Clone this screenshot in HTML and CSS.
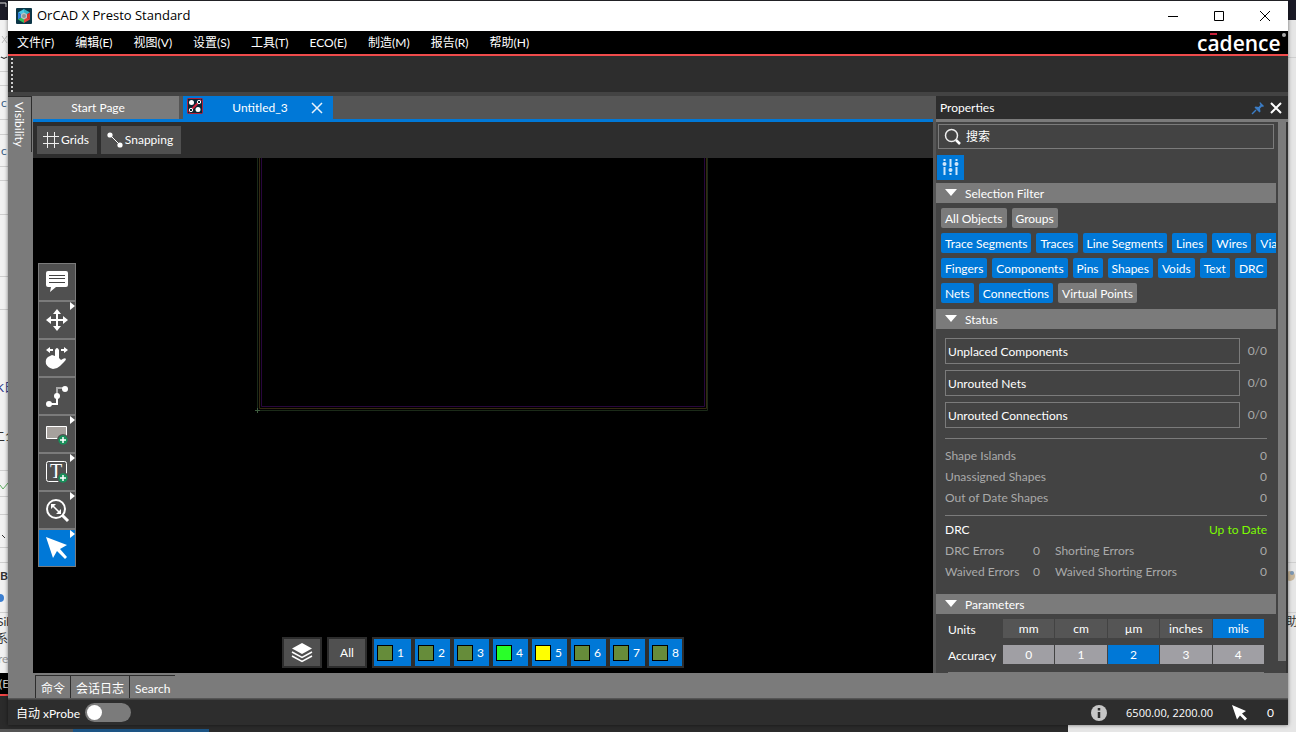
FILE: index.html
```html
<!DOCTYPE html>
<html lang="zh-CN">

<head>
    <meta charset="utf-8">
    <meta name="viewport" content="width=device-width">
    <title>OrCAD X Presto Standard</title>
    <link rel="stylesheet" href="styles.css">
</head>

<body>
    <div class="desktop">

        <!-- windows that stick out behind the main one -->
        <div class="behind-top"></div>
        <svg class="behind-left" width="8" height="732">
            <rect width="8" height="732" fill="#f2f2f2"/>
            <rect width="8" height="20" fill="#1b1b27"/>
            <path d="M0 3h6v4" stroke="#ddd" fill="none"/>
            <path d="M0 57.500h8M0 71.500h8M0 85.500h8M0 119.500h8M0 134.500h8M0 166.500h8M0 180.500h8M0 214.500h8M0 276.500h8M0 309.500h8M0 470.500h8M0 496.500h8M0 514.500h8M0 547.500h8M0 562.500h8M0 612.500h8" stroke="#cfcfcf"/>
            <path d="M2 36l5 7M7 36l-5 7" stroke="#bbb" fill="none"/>
            <path d="M1 57q3 3 6 0" stroke="#222" fill="none"/>
            <path d="M0 485l3 4 5-6" stroke="#5fae62" fill="none"/>
            <path d="M2 535l3 3" stroke="#333"/>
            <circle cx="0" cy="598" r="4" fill="#3c7fd0"/>
            <text x="1" y="107" fill="#3b5f85">c</text>
            <text x="1" y="155" fill="#3b5f85">c</text>
            <text x="-4" y="392" fill="#2c3a8c">K日</text>
            <text x="-7" y="441" fill="#333">二1</text>
            <text x="0" y="580" fill="#333" font-weight="bold">B</text>
            <text x="-3" y="626" fill="#333">Sil</text>
            <text x="-4" y="643" fill="#333">系</text>
            <text x="-2" y="663" fill="#999">re</text>
            <rect y="673" width="8" height="21" fill="#000"/>
            <text x="-1" y="688" fill="#ccc">(E</text>
            <rect y="694" width="8" height="2" fill="#ef4444"/>
            <rect y="696" width="8" height="40" fill="#2b2b2b"/>
        </svg>
        <svg class="behind-right" width="8" height="732">
            <rect width="8" height="732" fill="#e6e6e6"/>
            <rect width="8" height="20" fill="#1b1b27"/>
            <path d="M0 57.500h8M0 562.500h8M0 612.500h8" stroke="#cfcfcf"/>
            <circle cx="2" cy="576" r="5" fill="#c9b79b"/>
            <circle cx="4" cy="573" r="2" fill="#7d98b4"/>
            <text x="-2" y="626" fill="#333">助</text>
        </svg>
        <div class="behind-bottom"><i></i><b></b><span></span></div>

        <div class="window">

            <header class="titlebar">
                <svg width="16" height="16" viewBox="0 0 16 16">
                    <rect width="16" height="16" rx="1" fill="#0b3546"/>
                    <path d="M8 1l6 3.500L8 8z" fill="#2fb5c8"/>
                    <path d="M8 1L2 4.500 8 8z" fill="#4bc6e6"/>
                    <path d="M2 4.500v7L8 8z" fill="#2f7fe0"/>
                    <path d="M2 11.500L8 15V8z" fill="#35c05a"/>
                    <path d="M14 4.500v7L8 8z" fill="#d9302c"/>
                    <path d="M14 11.500L8 15V8z" fill="#e2453a"/>
                    <path d="M8 4.500l3 1.700v3.600l-3 1.700-3-1.700V6.200z" fill="#b9c4c6"/>
                    <circle cx="8" cy="8" r="2" fill="#8d9495"/>
                </svg>
                <h1>OrCAD X Presto Standard</h1>
                <div class="win-buttons">
                    <button aria-label="Minimize"><svg width="12" height="12"><path d="M1 6.500h10" stroke="#000"/></svg></button>
                    <button aria-label="Maximize"><svg width="12" height="12"><path d="M1.500 1.500h9v9h-9z" stroke="#000" fill="none"/></svg></button>
                    <button aria-label="Close"><svg width="12" height="12"><path d="M1 1l10 10M11 1L1 11" stroke="#000" fill="none"/></svg></button>
                </div>
            </header>

            <nav class="menubar">
                <button>文件(F)</button>
                <button>编辑(E)</button>
                <button>视图(V)</button>
                <button>设置(S)</button>
                <button>工具(T)</button>
                <button>ECO(E)</button>
                <button>制造(M)</button>
                <button>报告(R)</button>
                <button>帮助(H)</button>
                <svg class="brand" width="91" height="23" viewBox="0 0 91 23">
                    <text x="0" y="20">cadence</text>
                    <rect x="13" y="2" width="7" height="2" fill="#c8203a"/>
                    <circle cx="87" cy="4" r="2" fill="#aaa"/>
                </svg>
            </nav>

            <div class="toolbar"></div>

            <div class="main">

                <aside class="left-dock">
                    <button class="dock-tab">Visibility</button>
                </aside>

                <section class="document">
                    <div class="doc-tabs">
                        <button class="doc-tab">Start Page</button>
                        <div class="doc-tab active">
                            <svg class="board-icon" width="16" height="16" viewBox="0 0 16 16">
                                <rect x=".5" y=".5" width="15" height="15" rx="1" fill="#0c2733" stroke="#b3203a"/>
                                <path d="M2 14L14 2" stroke="#d3203a" stroke-width="2"/>
                                <circle cx="4.500" cy="4.500" r="2.500" fill="#fff"/>
                                <circle cx="11" cy="11.500" r="2.500" fill="#fff"/>
                                <circle cx="12" cy="4" r="1.700" fill="#0c2733" stroke="#fff"/>
                                <circle cx="4" cy="12" r="1.700" fill="#0c2733" stroke="#fff"/>
                            </svg>
                            <span>Untitled_3</span>
                            <button aria-label="Close tab"><svg width="12" height="12"><path d="M1 1l10 10M11 1L1 11" stroke="#e8f2fb" stroke-width="1.500"/></svg></button>
                        </div>
                    </div>

                    <div class="doc-tools">
                        <button>
                            <svg width="16" height="16"><path d="M4.500 0v16M11.500 0v16M0 4.500h16M0 11.500h16" stroke="#eee"/></svg>
                            <span>Grids</span>
                        </button>
                        <button>
                            <svg width="16" height="16"><path d="M3 3l11 11" stroke="#fff"/><circle cx="3" cy="3" r="2.600" fill="#fff"/><circle cx="13" cy="13" r="2.600" fill="#fff"/></svg>
                            <span>Snapping</span>
                        </button>
                    </div>

                    <div class="canvas">
                        <svg class="board" width="900" height="515">
                            <path d="M224.500 0v252.500H674.500V0" stroke="#1b2a18"/>
                            <path d="M226.500 0v250.500H673.500V0" stroke="#352a12"/>
                            <path d="M228.500 0v248.500H671.500V0" stroke="#28063c"/>
                            <path d="M222 252.500h5M224.500 250v5" stroke="#3e5c3e"/>
                        </svg>

                        <div class="palette">
                            <button aria-label="Comment">
                                <svg viewBox="0 0 36 36">
                                    <path d="M9 7h18a2 2 0 0 1 2 2v12a2 2 0 0 1-2 2H17l-6 5 1-5H9a2 2 0 0 1-2-2V9a2 2 0 0 1 2-2z" fill="#fff"/>
                                    <path d="M10 11.500h16M10 14.500h16M10 18.500h16" stroke="#444"/>
                                </svg>
                            </button>
                            <button class="more" aria-label="Move">
                                <svg viewBox="0 0 36 36">
                                    <path d="M18 9v18M9 18h18" stroke="#fff" stroke-width="2"/>
                                    <path d="M18 7l4 5h-8zM18 29l4-5h-8zM7 18l5-4v8zM29 18l-5-4v8z" fill="#fff"/>
                                </svg>
                            </button>
                            <button aria-label="Slide">
                                <svg viewBox="0 0 36 36">
                                    <path d="M7 10l4-3v2h3v2h-3v2zM29 10l-4-3v2h-3v2h3v2z" fill="#fff"/>
                                    <path d="M16 10q2-4 4 0v8l2 2q4-3 5-1 0 1-2 3l-4 4q-3 3-7 3-5-1-7-5-1-5 2-7l4-2 3 1z" fill="#fff"/>
                                </svg>
                            </button>
                            <button aria-label="Route">
                                <svg viewBox="0 0 36 36">
                                    <path d="M10 26h8v-8" stroke="#fff" stroke-width="2" fill="none"/>
                                    <path d="M18 18v-8h8" stroke="#aaa" stroke-width="2" fill="none"/>
                                    <circle cx="10" cy="26" r="3" fill="#fff"/><circle cx="18" cy="18" r="3" fill="#fff"/><circle cx="26" cy="11" r="3" fill="#fff"/>
                                </svg>
                            </button>
                            <button class="more" aria-label="Add shape">
                                <svg viewBox="0 0 36 36">
                                    <path d="M7.500 10.500h20v12h-20z" fill="#a6a19d" stroke="#fff"/>
                                    <circle cx="24" cy="24" r="6" fill="#505050"/>
                                    <circle cx="24" cy="24" r="4.700" fill="#188f5a"/><path d="M24 21v6M21 24h6" stroke="#fff" stroke-width="1.500"/>
                                </svg>
                            </button>
                            <button class="more" aria-label="Add text">
                                <svg viewBox="0 0 36 36">
                                    <rect x="7.500" y="7.500" width="20" height="20" rx="2" fill="none" stroke="#fff"/>
                                    <text x="17" y="24" text-anchor="middle" class="serif-t">T</text>
                                    <circle cx="24" cy="24" r="6" fill="#505050"/>
                                    <circle cx="24" cy="24" r="4.700" fill="#188f5a"/><path d="M24 21v6M21 24h6" stroke="#fff" stroke-width="1.500"/>
                                </svg>
                            </button>
                            <button class="more" aria-label="Zoom">
                                <svg viewBox="0 0 36 36">
                                    <circle cx="17" cy="17" r="9" fill="none" stroke="#fff" stroke-width="2"/>
                                    <path d="M23 23l6 6" stroke="#fff" stroke-width="3"/>
                                    <path d="M14 14l6 6" stroke="#fff" stroke-width="1.500"/>
                                    <path d="M12 12h5l-5 5zM22 22h-5l5-5z" fill="#fff"/>
                                </svg>
                            </button>
                            <button class="more active" aria-label="Select">
                                <svg viewBox="0 0 36 36">
                                    <path d="M7 7l21 8-7 4 7 8-2 2-8-8-4 7z" fill="#fff"/>
                                </svg>
                            </button>
                        </div>

                        <div class="layerbar">
                            <button class="layer-btn" aria-label="Layers">
                                <svg width="22" height="20" viewBox="0 0 22 20">
                                    <path d="M11 0l10 5.500L11 11 1 5.500z" fill="#fff"/>
                                    <path d="M1 9l10 5.500L21 9M1 13l10 5.500L21 13" stroke="#fff" stroke-width="1.500" fill="none"/>
                                </svg>
                            </button>
                            <button class="layer-btn">All</button>
                            <div class="layers">
                                <button><i></i>1</button>
                                <button><i></i>2</button>
                                <button><i></i>3</button>
                                <button><i class="lime"></i>4</button>
                                <button><i class="yellow"></i>5</button>
                                <button><i></i>6</button>
                                <button><i></i>7</button>
                                <button><i></i>8</button>
                            </div>
                        </div>
                    </div>
                </section>

                <aside class="properties">
                    <div class="panel-head">
                        <h2>Properties</h2>
                        <button aria-label="Pin">
                            <svg width="14" height="14" viewBox="0 0 14 14"><path d="M1 13l4-4" stroke="#3b7cc4" stroke-width="1.500"/><path d="M9 1l4 4-1 1-1-.5-2 2 .5 3-1 1-5-5 1-1 3 .5 2-2L8.500 2z" fill="#3b7cc4"/></svg>
                        </button>
                        <button aria-label="Close panel">
                            <svg width="12" height="12"><path d="M1 1l10 10M11 1L1 11" stroke="#fff" stroke-width="2"/></svg>
                        </button>
                    </div>

                    <div class="panel-body">
                        <div class="panel-content">
                            <label class="search">
                                <svg width="18" height="18" viewBox="0 0 18 18"><circle cx="7.500" cy="7.500" r="6" fill="none" stroke="#eee" stroke-width="1.500"/><path d="M12 12l4 4" stroke="#fff" stroke-width="2.500"/></svg>
                                <input type="text" placeholder="搜索" aria-label="搜索">
                            </label>
                            <button class="filter-btn" aria-label="Filters">
                                <svg width="17" height="17" viewBox="0 0 17 17">
                                    <path d="M2.500 0v2M2.500 8v8M8.500 0v8M8.500 14v2M14.500 0v2M14.500 8v8" stroke="#cfe6fb" stroke-width="2"/>
                                    <circle cx="2.500" cy="5" r="2" fill="#cfe6fb"/><circle cx="8.500" cy="11" r="2" fill="#cfe6fb"/><circle cx="14.500" cy="5" r="2" fill="#cfe6fb"/>
                                </svg>
                            </button>

                            <h3 class="section-head">Selection Filter</h3>
                            <div class="chips">
                                <div class="chip-row">
                                    <button class="off">All Objects</button><button class="off">Groups</button>
                                </div>
                                <div class="chip-row">
                                    <button>Trace Segments</button><button>Traces</button><button>Line Segments</button><button>Lines</button><button>Wires</button><button>Vias</button>
                                </div>
                                <div class="chip-row">
                                    <button>Fingers</button><button>Components</button><button>Pins</button><button>Shapes</button><button>Voids</button><button>Text</button><button>DRC</button>
                                </div>
                                <div class="chip-row">
                                    <button>Nets</button><button>Connections</button><button class="off">Virtual Points</button>
                                </div>
                            </div>

                            <h3 class="section-head">Status</h3>
                            <div class="status">
                                <div class="unrouted"><button>Unplaced Components</button><span>0/0</span></div>
                                <div class="unrouted"><button>Unrouted Nets</button><span>0/0</span></div>
                                <div class="unrouted"><button>Unrouted Connections</button><span>0/0</span></div>
                                <hr>
                                <div class="row"><span>Shape Islands</span><span>0</span></div>
                                <div class="row"><span>Unassigned Shapes</span><span>0</span></div>
                                <div class="row"><span>Out of Date Shapes</span><span>0</span></div>
                                <hr>
                                <div class="row"><strong>DRC</strong><em>Up to Date</em></div>
                                <div class="row errors"><span>DRC Errors</span><span>0</span><span>Shorting Errors</span><span>0</span></div>
                                <div class="row errors"><span>Waived Errors</span><span>0</span><span>Waived Shorting Errors</span><span>0</span></div>
                            </div>

                            <h3 class="section-head">Parameters</h3>
                            <div class="params">
                                <div class="param">
                                    <span>Units</span>
                                    <div class="choices">
                                        <button>mm</button><button>cm</button><button>µm</button><button>inches</button><button class="active">mils</button>
                                    </div>
                                </div>
                                <div class="param accuracy">
                                    <span>Accuracy</span>
                                    <div class="choices">
                                        <button>0</button><button>1</button><button class="active">2</button><button>3</button><button>4</button>
                                    </div>
                                </div>
                                <hr>
                            </div>
                        </div>
                        <div class="scrollbar"><div class="thumb"></div></div>
                    </div>
                </aside>
            </div>

            <nav class="bottom-tabs">
                <button>命令</button>
                <button>会话日志</button>
                <button>Search</button>
            </nav>

            <footer class="statusbar">
                <label for="xprobe">自动 xProbe</label>
                <input type="checkbox" id="xprobe" class="toggle">
                <svg class="info" width="16" height="16"><circle cx="8" cy="8" r="8" fill="#c6c6c6"/><path d="M8 3v2.500M8 7v6" stroke="#2d2d2d" stroke-width="2.500"/></svg>
                <span class="coords">6500.00, 2200.00</span>
                <svg class="pointer" width="16" height="16"><path d="M0 0l14 6-4 2.500 5 5-2 2-5-5-3 4z" fill="#fff"/></svg>
                <span class="count">0</span>
            </footer>
        </div>
    </div>
</body>

</html>
```
FILE: styles.css
```css
* {
    box-sizing: border-box;
}

body {
    margin: 0;
    font-family: Lato, "Noto Sans CJK SC", sans-serif;
    font-size: 12px;
    line-height: 16px;
    color: #fff;
}

button, input {
    font: inherit;
    color: inherit;
    border: 0;
    padding: 0;
    margin: 0;
    background: none;
}

h1, h2, h3 {
    margin: 0;
    font-size: 12px;
    font-weight: normal;
}

svg {
    display: block;
    flex: none;
}

hr {
    width: 100%;
    height: 1px;
    border: 0;
    background: #7b7b7b;
}

/* desktop */
.desktop {
    display: grid;
    grid-template-columns: 8px minmax(0, 1fr) 8px;
    grid-template-rows: 1px minmax(0, 1fr) 7px;
    height: 100vh;
    overflow: hidden;
    background: #2b2b2b;
}

.behind-top {
    grid-area: 1 / 1 / 2 / 4;
    background: #2b2b30;
}

.behind-left {
    grid-area: 1 / 1 / 4 / 2;
}

.behind-right {
    grid-area: 1 / 3 / 4 / 4;
}

.behind-bottom {
    grid-area: 3 / 1 / 4 / 4;
    display: grid;
    grid-template-columns: 73px 136px 1fr 228px;
    align-items: end;
    background: #2b2b2b;
}

.behind-bottom i {
    height: 3px;
    background: #555;
}

.behind-bottom b {
    height: 3px;
    background: #1d5585;
}

.behind-bottom span {
    grid-column: 4;
    height: 7px;
    background: #e6e6e6;
}

.window {
    grid-area: 2 / 2 / 3 / 3;
    display: flex;
    flex-direction: column;
    min-height: 0;
    background: #434343;
    box-shadow: 0 0 4px #00000088;
}

/* title and menu */
.titlebar {
    display: flex;
    align-items: center;
    height: 30px;
    padding-left: 8px;
    gap: 5px;
    background: #fff;
    color: #000;
}

.titlebar h1 {
    font-family: "Open Sans", sans-serif;
    font-size: 13px;
    line-height: 14px;
    padding-bottom: 2px;
}

.win-buttons {
    display: flex;
    margin-left: auto;
}

.win-buttons button {
    display: flex;
    align-items: center;
    justify-content: center;
    width: 46px;
    height: 30px;
}

.menubar {
    display: flex;
    align-items: center;
    height: 25px;
    padding-left: 9px;
    gap: 21px;
    background: #000;
    border-bottom: 2px solid #ef4b4b;
}

.brand {
    margin-left: auto;
}

.brand text {
    font-family: "Open Sans", sans-serif;
    font-size: 21px;
    font-weight: 600;
    fill: #fff;
}

.toolbar {
    height: 40px;
    padding-left: 3px;
    background: #2d2d2d;
    border-bottom: 4px solid #434343;
}

.toolbar::before {
    content: "";
    display: block;
    width: 2px;
    height: 34px;
    margin-top: 2px;
    background: repeating-linear-gradient(#ccc 0 2px, transparent 2px 4px);
}

/* main area */
.main {
    display: grid;
    grid-template-columns: 25px minmax(0, 1fr) 352px;
    flex: 1;
    min-height: 0;
}

.left-dock {
    background: #7b7b7b;
}

.dock-tab {
    writing-mode: vertical-rl;
    width: 24px;
    height: 56px;
    padding-right: 2px;
    border-top: 1px solid #2d2d2d;
    border-right: 1px solid #2d2d2d;
}

.document {
    display: flex;
    flex-direction: column;
    min-width: 0;
    background: #2d2d2d;
    border-right: 3px solid #555;
}

.doc-tabs {
    display: flex;
    gap: 4px;
    height: 26px;
    background: #555;
    border-bottom: 3px solid #0078d7;
}

.doc-tab {
    width: 146px;
    background: #7b7b7b;
    padding-right: 16px;
}

.doc-tab.active {
    display: flex;
    align-items: center;
    width: 150px;
    padding: 0 10px 0 4px;
    background: #0078d7;
}

.doc-tab.active span {
    flex: 1;
    text-align: center;
    padding-left: 6px;
}

.board-icon {
    margin-bottom: 3px;
}

.doc-tools {
    display: flex;
    gap: 4px;
    padding: 4px;
}

.doc-tools button {
    display: flex;
    align-items: center;
    gap: 2px;
    height: 28px;
    padding: 0 8px 0 6px;
    background: #505050;
}

.canvas {
    display: grid;
    flex: 1;
    min-height: 0;
    position: relative;
    background: #000;
}

.board {
    position: absolute;
    fill: none;
}

.palette {
    grid-area: 1 / 1;
    place-self: center start;
    position: relative;
    display: flex;
    flex-direction: column;
    margin: 0 0 2px 5px;
    border: 1px solid #7b7b7b;
}

.palette button {
    position: relative;
    width: 36px;
    height: 38px;
    background: #505050;
    border-bottom: 2px solid #7b7b7b;
}

.palette button:last-child {
    height: 36px;
    border: 0;
}

.palette .active {
    background: #0078d7;
}

.palette .more::after {
    content: "";
    position: absolute;
    top: 0;
    right: 0;
    border: 4px solid transparent;
    border-left: 5px solid #fff;
    border-right: 0;
}

.serif-t {
    font: 20px "Liberation Serif", serif;
    fill: #fff;
}

.layerbar {
    grid-area: 1 / 1;
    place-self: end center;
    position: relative;
    display: flex;
    gap: 5px;
    margin-bottom: 5px;
}

.layer-btn {
    display: flex;
    align-items: center;
    justify-content: center;
    width: 40px;
    height: 31px;
    background: #505050;
    border: 2px solid #2d2d2d;
}

.layers {
    display: flex;
    gap: 4px;
    padding: 2px;
    background: #2d2d2d;
}

.layers button {
    display: flex;
    align-items: center;
    gap: 4px;
    width: 35px;
    height: 27px;
    padding-left: 3px;
    background: #0078d7;
}

.layers button:first-child {
    width: 37px;
}

.layers button:last-child {
    width: 33px;
}

.layers i {
    width: 16px;
    height: 16px;
    background: #668c3a;
    border: 1px solid #000;
}

.layers .lime {
    background: #29ff29;
}

.layers .yellow {
    background: #ff0;
}

/* properties */
.properties {
    display: flex;
    flex-direction: column;
    min-height: 0;
}

.panel-head {
    display: flex;
    align-items: center;
    gap: 5px;
    height: 26px;
    padding: 0 6px 0 4px;
    background: #2d2d2d;
    border-bottom: 3px solid #7b7b7b;
}

.panel-head h2 {
    flex: 1;
}

.panel-body {
    display: flex;
    flex: 1;
    min-height: 0;
    gap: 2px;
}

.panel-content {
    flex: 1;
    min-width: 0;
    overflow: hidden;
}

.search {
    display: flex;
    align-items: center;
    gap: 3px;
    height: 25px;
    margin: 2px 2px 6px;
    padding-left: 5px;
    border: 1px solid #7b7b7b;
}

.search input {
    flex: 1;
    height: 20px;
    padding-left: 1px;
}

.search input::placeholder {
    color: #fff;
    opacity: 1;
}

.filter-btn {
    display: flex;
    align-items: center;
    justify-content: center;
    width: 27px;
    height: 25px;
    margin: 0 0 3px 1px;
    background: #0078d7;
}

.section-head {
    display: flex;
    align-items: center;
    gap: 8px;
    height: 20px;
    padding: 2px 0 0 9px;
    background: #7b7b7b;
}

.section-head::before {
    content: "";
    margin-bottom: 3px;
    border: 6px solid transparent;
    border-top: 7px solid #fff;
    border-bottom: 0;
}

.chips {
    display: flex;
    flex-direction: column;
    gap: 5px;
    padding: 5px 0 6px 5px;
}

.chip-row {
    display: flex;
    gap: 5px;
}

.chip-row button {
    flex: none;
    height: 20px;
    padding: 1px 4px 0;
    border-radius: 2px;
    background: #0078d7;
}

.chip-row .off {
    background: #7b7b7b;
}

.status {
    padding: 9px 9px 12px;
    color: #aaa;
}

.unrouted {
    display: flex;
    align-items: center;
    gap: 8px;
    margin-bottom: 6px;
}

.unrouted button {
    flex: 1;
    height: 26px;
    padding: 1px 2px 0;
    border: 1px solid #7b7b7b;
    color: #fff;
    text-align: left;
}

.status hr {
    margin: 10px 0 6px;
}

.status .row + hr {
    margin: 7px 0 3px;
}

.row {
    display: flex;
    justify-content: space-between;
    line-height: 21px;
}

.row strong {
    font-weight: normal;
    color: #fff;
}

.row em {
    font-style: normal;
    color: #7cfc00;
}

.errors {
    display: grid;
    grid-template-columns: 88px 22px 1fr auto;
}

.params {
    padding: 5px 12px 0;
}

.param {
    display: grid;
    grid-template-columns: 55px 1fr;
    align-items: center;
    margin-bottom: 7px;
}

.param span {
    padding-top: 2px;
}

.choices {
    display: grid;
    grid-template-columns: repeat(5, 1fr);
    gap: 1px;
}

.choices button {
    height: 19px;
    background: #555;
}

.accuracy button {
    background: #a09fa4;
}

.choices .active {
    background: #0078d7;
}

.params hr {
    margin: 8px 0 0;
}

.scrollbar {
    width: 10px;
    padding-bottom: 12px;
    border-right: 2px solid #333;
}

.thumb {
    height: 100%;
    background: #7b7b7b;
}

/* bottom */
.bottom-tabs {
    display: flex;
    height: 26px;
    padding: 2px 0 0 27px;
    background: #7b7b7b;
    border-bottom: 1px solid #555;
}

.bottom-tabs button {
    padding: 3px 5px 0;
    border-top: 1px solid #2d2d2d;
    border-left: 1px solid #2d2d2d;
}

.statusbar {
    display: flex;
    align-items: center;
    height: 26px;
    padding: 0 14px 0 8px;
    background: #2d2d2d;
    border-top: 1px solid #434343;
}

.statusbar label {
    padding-top: 3px;
}

.toggle {
    appearance: none;
    width: 46px;
    height: 19px;
    margin-left: 5px;
    padding: 2px;
    border-radius: 10px;
    background: #7b7b7b;
}

.toggle::before {
    content: "";
    display: block;
    width: 15px;
    height: 15px;
    border-radius: 50%;
    background: #fff;
}

.toggle:checked::before {
    margin-left: auto;
}

.info {
    margin-left: auto;
}

.coords {
    margin: 0 19px;
    font-family: "Open Sans", sans-serif;
    font-size: 11px;
}

.count {
    margin-left: 19px;
}
```
